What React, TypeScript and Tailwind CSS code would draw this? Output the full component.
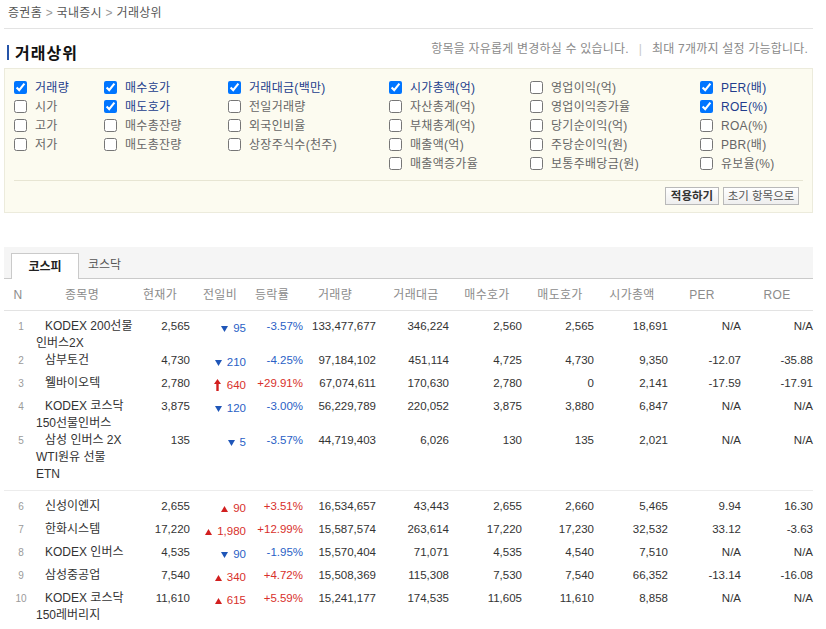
import React from "react";

type Dir = "down" | "up" | "upper";
type Row = {
  n: number;
  name: string[];
  price: string;
  dir: Dir;
  diff: string;
  rate: string;
  vol: string;
  amt: string;
  bid: string;
  ask: string;
  cap: string;
  per: string;
  roe: string;
};

const rowsA: Row[] = [
  { n: 1, name: ["KODEX 200선물", "인버스2X"], price: "2,565", dir: "down", diff: "95", rate: "-3.57%", vol: "133,477,677", amt: "346,224", bid: "2,560", ask: "2,565", cap: "18,691", per: "N/A", roe: "N/A" },
  { n: 2, name: ["삼부토건"], price: "4,730", dir: "down", diff: "210", rate: "-4.25%", vol: "97,184,102", amt: "451,114", bid: "4,725", ask: "4,730", cap: "9,350", per: "-12.07", roe: "-35.88" },
  { n: 3, name: ["웰바이오텍"], price: "2,780", dir: "upper", diff: "640", rate: "+29.91%", vol: "67,074,611", amt: "170,630", bid: "2,780", ask: "0", cap: "2,141", per: "-17.59", roe: "-17.91" },
  { n: 4, name: ["KODEX 코스닥", "150선물인버스"], price: "3,875", dir: "down", diff: "120", rate: "-3.00%", vol: "56,229,789", amt: "220,052", bid: "3,875", ask: "3,880", cap: "6,847", per: "N/A", roe: "N/A" },
  { n: 5, name: ["삼성 인버스 2X", "WTI원유 선물", "ETN"], price: "135", dir: "down", diff: "5", rate: "-3.57%", vol: "44,719,403", amt: "6,026", bid: "130", ask: "135", cap: "2,021", per: "N/A", roe: "N/A" },
];

const rowsB: Row[] = [
  { n: 6, name: ["신성이엔지"], price: "2,655", dir: "up", diff: "90", rate: "+3.51%", vol: "16,534,657", amt: "43,443", bid: "2,655", ask: "2,660", cap: "5,465", per: "9.94", roe: "16.30" },
  { n: 7, name: ["한화시스템"], price: "17,220", dir: "up", diff: "1,980", rate: "+12.99%", vol: "15,587,574", amt: "263,614", bid: "17,220", ask: "17,230", cap: "32,532", per: "33.12", roe: "-3.63" },
  { n: 8, name: ["KODEX 인버스"], price: "4,535", dir: "down", diff: "90", rate: "-1.95%", vol: "15,570,404", amt: "71,071", bid: "4,535", ask: "4,540", cap: "7,510", per: "N/A", roe: "N/A" },
  { n: 9, name: ["삼성중공업"], price: "7,540", dir: "up", diff: "340", rate: "+4.72%", vol: "15,508,369", amt: "115,308", bid: "7,530", ask: "7,540", cap: "66,352", per: "-13.14", roe: "-16.08" },
  { n: 10, name: ["KODEX 코스닥", "150레버리지"], price: "11,610", dir: "up", diff: "615", rate: "+5.59%", vol: "15,241,177", amt: "174,535", bid: "11,605", ask: "11,610", cap: "8,858", per: "N/A", roe: "N/A" },
];

const cols: { label: string; checked: boolean }[][] = [
  [
    { label: "거래량", checked: true },
    { label: "시가", checked: false },
    { label: "고가", checked: false },
    { label: "저가", checked: false },
  ],
  [
    { label: "매수호가", checked: true },
    { label: "매도호가", checked: true },
    { label: "매수총잔량", checked: false },
    { label: "매도총잔량", checked: false },
  ],
  [
    { label: "거래대금(백만)", checked: true },
    { label: "전일거래량", checked: false },
    { label: "외국인비율", checked: false },
    { label: "상장주식수(천주)", checked: false },
  ],
  [
    { label: "시가총액(억)", checked: true },
    { label: "자산총계(억)", checked: false },
    { label: "부채총계(억)", checked: false },
    { label: "매출액(억)", checked: false },
    { label: "매출액증가율", checked: false },
  ],
  [
    { label: "영업이익(억)", checked: false },
    { label: "영업이익증가율", checked: false },
    { label: "당기순이익(억)", checked: false },
    { label: "주당순이익(원)", checked: false },
    { label: "보통주배당금(원)", checked: false },
  ],
  [
    { label: "PER(배)", checked: true },
    { label: "ROE(%)", checked: true },
    { label: "ROA(%)", checked: false },
    { label: "PBR(배)", checked: false },
    { label: "유보율(%)", checked: false },
  ],
];

const GRID =
  "grid grid-cols-[32px_97px_57px_56px_57px_73px_73px_73px_72px_74px_73px_72px]";

function DownTri() {
  return (
    <svg width="7" height="6" viewBox="0 0 7 6" className="mr-[5px] mt-[1px]">
      <polygon points="0,0 7,0 3.5,6" fill="#1f56b8" />
    </svg>
  );
}
function UpTri() {
  return (
    <svg width="7" height="6" viewBox="0 0 7 6" className="mr-[5px] mt-[1px]">
      <polygon points="3.5,0 7,6 0,6" fill="#d21f1f" />
    </svg>
  );
}
function UpperArrow() {
  return (
    <svg width="7" height="12" viewBox="0 0 7 12" className="mr-[6px] -mt-[1px]">
      <polygon points="3.5,0 7,5 4.7,5 4.7,12 2.3,12 2.3,5 0,5" fill="#d21f1f" />
    </svg>
  );
}

function DataRow({ r }: { r: Row }) {
  const red = r.dir !== "down";
  const chg = red ? "text-[#d8302b]" : "text-[#2a5fc6]";
  const num = "pt-[3px] h-[23px] leading-[17px] text-right";
  return (
    <div className={`${GRID} text-[11.5px] text-[#333]`}>
      <div className="pt-[3px] h-[23px] leading-[17px] text-center text-[10px] text-[#9a9a9a] pl-[2px]">
        {r.n}
      </div>
      <div className="pt-[3px] leading-[17px] -mb-[3px] text-[12px] text-[#333] whitespace-nowrap">
        {r.name.map((l, i) => (
          <div key={i} className={i === 0 ? "pl-[9px]" : ""}>
            {l}
          </div>
        ))}
      </div>
      <div className={num}>{r.price}</div>
      <div className={`${num} flex items-center justify-end pt-0 ${chg}`}>
        {r.dir === "down" ? <DownTri /> : r.dir === "up" ? <UpTri /> : <UpperArrow />}
        <span className="leading-[17px]">{r.diff}</span>
      </div>
      <div className={`${num} ${chg}`}>{r.rate}</div>
      <div className={num}>{r.vol}</div>
      <div className={num}>{r.amt}</div>
      <div className={num}>{r.bid}</div>
      <div className={num}>{r.ask}</div>
      <div className={num}>{r.cap}</div>
      <div className={num}>{r.per}</div>
      <div className={num}>{r.roe}</div>
    </div>
  );
}

export default function App() {
  const headers: { t: string; cls: string }[] = [
    { t: "N", cls: "pr-[4px]" },
    { t: "종목명", cls: "pr-[5px]" },
    { t: "현재가", cls: "pr-[3px]" },
    { t: "전일비", cls: "pl-[4px]" },
    { t: "등락률", cls: "pr-[5px]" },
    { t: "거래량", cls: "pr-[9px]" },
    { t: "거래대금", cls: "pl-[7px]" },
    { t: "매수호가", cls: "pl-[3px]" },
    { t: "매도호가", cls: "pl-[4px]" },
    { t: "시가총액", cls: "pl-[2px]" },
    { t: "PER", cls: "pr-[5px]" },
    { t: "ROE", cls: "" },
  ];
  return (
    <div className="min-h-[629px] bg-white font-['Liberation_Sans','Noto_Sans_CJK_KR',sans-serif]">
      <div className="ml-[4px] w-[809px]">
        {/* breadcrumb */}
        <div className="h-[29px] border-b border-[#e3e3e3] pt-[5px] pl-[4px] text-[12px] leading-[16px] tracking-[0.3px] text-[#555]">
          증권홈 <span className="text-[#999]">&gt;</span> 국내증시{" "}
          <span className="text-[#999]">&gt;</span> 거래상위
        </div>

        {/* title */}
        <div className="mt-[13px] flex items-start justify-between">
          <div className="flex h-[20px] items-center pl-[3px]">
            <div className="h-[15px] w-[2px] bg-[#2554a8]" />
            <div className="ml-[6px] font-['Noto_Sans_CJK_KR',sans-serif] text-[16px] font-bold leading-[20px] tracking-[1px] text-[#111]">
              거래상위
            </div>
          </div>
          <div className="mt-[1px] pr-[5px] text-[12px] leading-[13px] tracking-[0.2px] text-[#8a8a8a]">
            항목을 자유롭게 변경하실 수 있습니다.
            <span className="mx-[10px] text-[#c8c8c8]">|</span>
            최대 7개까지 설정 가능합니다.
          </div>
        </div>

        {/* option panel */}
        <div className="mt-[6px] border border-[#ecebdc] bg-[#fcfbf0]">
          <div className="grid grid-cols-[90px_124px_161px_141px_170px_1fr] pl-[9px] pt-[9px]">
            {cols.map((col, ci) => (
              <div key={ci} className="flex flex-col">
                {col.map((it) => (
                  <label key={it.label} className="flex h-[19px] items-center">
                    <input
                      type="checkbox"
                      defaultChecked={it.checked}
                      className="h-[13px] w-[13px] accent-[#0075ff]"
                    />
                    <span
                      className={`ml-[8px] text-[12px] leading-[14px] tracking-[0.3px] ${
                        it.checked ? "text-[#233d8c]" : "text-[#666]"
                      }`}
                    >
                      {it.label}
                    </span>
                  </label>
                ))}
              </div>
            ))}
          </div>
          <div className="mx-[9px] mt-[7px] h-px bg-[#e7e5d3]" />
          <div className="mt-[6px] mb-[7px] flex justify-end gap-[4px] pr-[13px]">
            <button className="h-[18px] w-[54px] border border-[#b9b9b9] bg-gradient-to-b from-white to-[#eeeeee] text-[11.5px] font-bold leading-[16px] text-[#333]">
              적용하기
            </button>
            <button className="h-[18px] w-[76px] border border-[#b9b9b9] bg-gradient-to-b from-white to-[#eeeeee] text-[11.5px] leading-[16px] text-[#555]">
              초기 항목으로
            </button>
          </div>
        </div>

        {/* tabs */}
        <div className="mt-[34px] flex h-[32px] items-end border-b border-[#cacaca] bg-[#f5f5f5] pl-[7px]">
          <div className="-mb-px flex h-[26px] w-[68px] items-center justify-center border border-b-0 border-[#cacaca] bg-white text-[12px] font-bold text-[#222]">
            코스피
          </div>
          <div className="flex h-[26px] items-center px-[9px] text-[12px] text-[#555]">
            코스닥
          </div>
        </div>

        {/* table header */}
        <div className={`${GRID} h-[32px] items-center border-b border-[#e3e3e3] text-[12px] tracking-[0.3px] text-[#8c8c8c]`}>
          {headers.map((h) => (
            <div key={h.t} className={`text-center ${h.cls}`}>
              {h.t}
            </div>
          ))}
        </div>
        <div className="h-[4px]" />

        {rowsA.map((r) => (
          <DataRow key={r.n} r={r} />
        ))}
        <div className="h-[10px]" />
        <div className="h-px bg-[#ececec]" />
        <div className="h-[4px]" />
        {rowsB.map((r) => (
          <DataRow key={r.n} r={r} />
        ))}
      </div>
    </div>
  );
}
